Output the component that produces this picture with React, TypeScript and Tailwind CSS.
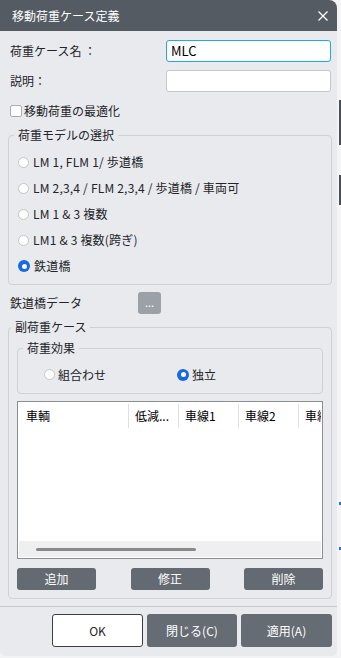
import React from 'react';

function Radio({ checked }: { checked?: boolean }) {
  if (checked) {
    return (
      <span className="w-[12px] h-[12px] rounded-full bg-[#1668e3] flex items-center justify-center shrink-0">
        <span className="w-[5px] h-[5px] rounded-full bg-white" />
      </span>
    );
  }
  return <span className="w-[11px] h-[11px] rounded-full bg-white border border-[#c3c5c9] shrink-0" />;
}

const models = [
  'LM 1, FLM 1/ 歩道橋',
  'LM 2,3,4 / FLM 2,3,4 / 歩道橋 / 車両可',
  'LM 1 & 3 複数',
  'LM1 & 3 複数(跨ぎ)',
  '鉄道橋',
];

const columns = [
  { label: '車輌', width: 'w-[109px]' },
  { label: '低減...', width: 'w-[50px]' },
  { label: '車線1', width: 'w-[60px]' },
  { label: '車線2', width: 'w-[60px]' },
  { label: '車線3', width: 'w-[60px]' },
];

export default function App() {
  return (
    <div className="w-[341px] h-[658px] flex bg-[#f2f3f5] font-['Noto_Sans_CJK_JP','Noto_Sans',sans-serif] text-[#222428] overflow-hidden">
      <div className="w-[337px] h-[656px] flex flex-col bg-[#e9eaee] rounded-tr-[8px] rounded-b-[5px] overflow-hidden shrink-0">
        {/* title bar */}
        <div className="h-[31px] bg-[#545b63] flex items-center justify-between pl-[12px] pr-[8px] shrink-0">
          <span className="text-white text-[12px] leading-none">移動荷重ケース定義</span>
          <svg width="12" height="12" viewBox="0 0 12 12" className="text-white">
            <path d="M1.5 1.5 L10.5 10.5 M10.5 1.5 L1.5 10.5" stroke="currentColor" strokeWidth="1.3" />
          </svg>
        </div>

        <div className="mt-[9px] h-[22px] flex items-center text-[12px]">
          <span className="pl-[10px]">荷重ケース名 ：</span>
          <div className="ml-auto mr-[6px] w-[165px] h-[22px] bg-white border border-[#1fa9e6] rounded-[3px] flex items-center pl-[4px] text-[13px] text-black">
            MLC
          </div>
        </div>
        <div className="mt-[8px] h-[22px] flex items-center text-[12px]">
          <span className="pl-[10px]">説明：</span>
          <div className="ml-auto mr-[6px] w-[165px] h-[22px] bg-white border border-[#c6c8cc] rounded-[3px]" />
        </div>
        <div className="mt-[11px] h-[16px] flex items-center gap-[2px] pl-[10px] text-[12px]">
          <span className="w-[12px] h-[12px] bg-white border border-[#a9acb0] rounded-[2px]" />
          <span>移動荷重の最適化</span>
        </div>

        {/* model group */}
        <fieldset className="mt-[8px] ml-[8px] mr-[5px] min-w-0 border border-[#cfd1d5] rounded-[4px] p-0">
          <legend className="ml-[5px] px-[4px] text-[12px] leading-[16px]">荷重モデルの選択</legend>
          <div className="pt-[6px] pb-[5px] pl-[9px] flex flex-col">
            {models.map((m, i) => (
              <div key={m} className="h-[26px] flex items-center gap-[4px] text-[12px] tracking-[0.2px]">
                <Radio checked={i === 4} />
                <span>{m}</span>
              </div>
            ))}
          </div>
        </fieldset>

        <div className="mt-[7px] h-[22px] flex items-center text-[12px]">
          <span className="pl-[10px] w-[138px]">鉄道橋データ</span>
          <div className="w-[23px] h-[22px] bg-[#9ca1a8] rounded-[3px] flex items-center justify-center text-white text-[11px] leading-none pb-[2px]">
            ...
          </div>
        </div>

        {/* sub load case group */}
        <fieldset className="mt-[5px] ml-[8px] mr-[5px] min-w-0 border border-[#cfd1d5] rounded-[4px] p-0">
          <legend className="ml-[2px] px-[4px] text-[12px] leading-[16px]">副荷重ケース</legend>
          <div className="px-[8px] pb-[8px] flex flex-col">
            <fieldset className="mt-[5px] min-w-0 border border-[#cfd1d5] rounded-[4px] p-0">
              <legend className="ml-[5px] px-[4px] text-[12px] leading-[16px]">荷重効果</legend>
              <div className="pt-[8px] pb-[8px] h-[37px] pl-[26px] flex items-center text-[12px]">
                <div className="w-[133px] flex items-center gap-[3px]">
                  <Radio />
                  <span>組合わせ</span>
                </div>
                <div className="flex items-center gap-[3px]">
                  <Radio checked />
                  <span>独立</span>
                </div>
              </div>
            </fieldset>

            <div className="mt-[7px] w-[306px] h-[158px] border border-[#8b8e93] bg-white flex flex-col p-[1px] overflow-hidden">
              <div className="mt-[1px] h-[24px] flex overflow-hidden text-[12px] text-black">
                {columns.map((c, i) => (
                  <div
                    key={c.label}
                    className={`${c.width} shrink-0 flex items-center whitespace-nowrap ${i === 0 ? 'pl-[7px]' : 'pl-[6px] border-l border-[#dedfe1]'}`}
                  >
                    {c.label}
                  </div>
                ))}
              </div>
              <div className="flex-1" />
              <div className="h-[16px] bg-[#efefef] flex items-center pl-[17px]">
                <div className="w-[160px] h-[3px] bg-[#8a8a8a] rounded-full" />
              </div>
            </div>

            <div className="mt-[9px] flex justify-between">
              {['追加', '修正', '削除'].map((b) => (
                <div key={b} className="w-[79px] h-[22px] bg-[#646a71] rounded-[3px] flex items-center justify-center text-white text-[12px]">
                  {b}
                </div>
              ))}
            </div>
          </div>
        </fieldset>

        <div className="mt-[7px] h-px bg-[#c6c8cc]" />

        <div className="mt-[7px] flex justify-end gap-[4px] pr-[5px]">
          <div className="w-[91px] h-[33px] bg-white border border-[#3b3f45] rounded-[3px] flex items-center justify-center text-[12px]">
            OK
          </div>
          <div className="w-[90px] h-[33px] bg-[#666c73] rounded-[3px] flex items-center justify-center text-white text-[12px]">
            閉じる(C)
          </div>
          <div className="w-[91px] h-[33px] bg-[#666c73] rounded-[3px] flex items-center justify-center text-white text-[12px]">
            適用(A)
          </div>
        </div>
      </div>

      {/* background strip */}
      <div className="w-[4px] flex flex-col items-end bg-[#f4f4f6]">
        <div className="h-[100px]" />
        <div className="w-[2px] h-[45px] bg-[#4a4f55]" />
        <div className="h-[30px]" />
        <div className="w-[2px] h-[30px] bg-[#4a4f55]" />
        <div className="h-[297px]" />
        <div className="w-[2px] h-[3px] bg-[#2f6fd6]" />
        <div className="h-[42px]" />
        <div className="w-[2px] h-[3px] bg-[#2f6fd6]" />
      </div>
    </div>
  );
}
